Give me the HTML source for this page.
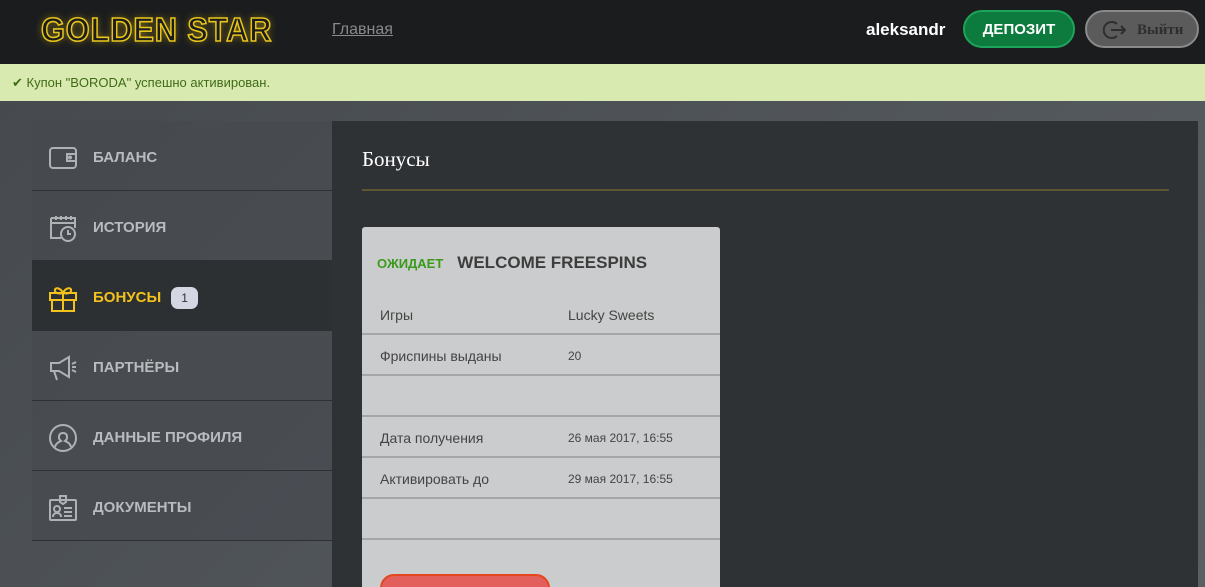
<!DOCTYPE html>
<html><head><meta charset="utf-8"><style>
*{margin:0;padding:0;box-sizing:border-box}
html,body{width:1205px;height:587px;overflow:hidden}
body{font-family:"Liberation Sans","DejaVu Sans",sans-serif;background:linear-gradient(135deg,#45494d 0%,#5a5f63 100%);position:relative}
.top{position:absolute;left:0;top:0;width:1205px;height:64px;background:#1b1c1e}
.logo{position:absolute;left:41px;top:11px;font-size:33px;font-weight:bold;letter-spacing:1px;color:#1b1c1e;-webkit-text-stroke:1.6px #e6c41c;text-shadow:0 0 8px rgba(230,190,20,.55);transform:scaleX(0.93);transform-origin:left}
.home{position:absolute;left:332px;top:21px;color:#8a8a8a;font-size:16px;text-decoration:underline}
.user{position:absolute;left:866px;top:20px;color:#fff;font-size:17px;font-weight:bold}
.dep{position:absolute;left:963px;top:10px;width:112px;height:38px;border-radius:19px;background:#0d7a3e;border:2px solid #1ea35a;color:#fff;font-weight:bold;font-size:15px;text-align:center;line-height:36px}
.out{position:absolute;left:1085px;top:10px;width:114px;height:38px;border-radius:19px;background:#5b5b5b;border:2px solid #8a8a8a;color:#2e2e2e;font-family:"Liberation Serif",serif;font-weight:bold;font-size:15px;line-height:36px;padding-left:50px}
.msg{position:absolute;left:0;top:64px;width:1205px;height:37px;background:#d9eab0;color:#3f6b16;font-size:13px;line-height:37px;padding-left:12px}
.side{position:absolute;left:32px;top:121px;width:300px}
.it{height:70px;border-bottom:1px solid #2e3134;background:rgba(70,74,78,.6);display:flex;align-items:center;padding-left:16px;padding-top:4px;color:#b9bcbf;font-weight:bold;font-size:15px}
.it svg{width:30px;height:30px;margin-right:15px;stroke:#aeb2b5;fill:none;stroke-width:2}
.it.act{background:#2d3033;color:#f4c21c}
.it.act svg{stroke:#f4c21c}
.badge{display:inline-block;background:#d4d6e2;color:#333;border-radius:7px;font-size:12px;width:27px;height:22px;text-align:center;line-height:22px;margin-left:10px;font-weight:normal}
.main{position:absolute;left:332px;top:121px;width:866px;height:466px;background:#2f3235;overflow:hidden}
.h{position:absolute;left:30px;top:26px;color:#fff;font-family:"Liberation Serif",serif;font-size:21px}
.line{position:absolute;left:30px;top:68px;width:807px;height:2px;background:#5e5633}
.card{position:absolute;left:30px;top:106px;width:358px;height:370px;background:#cbcccd;border-radius:3px;color:#444}
.ch{position:absolute;left:15px;top:26px;font-size:17px;font-weight:bold;color:#3d3d3d}
.ch b{color:#3a9a1a;font-size:13px;margin-right:14px}
.row{position:absolute;left:0;width:358px;height:41px;border-bottom:2px solid #a5a6a8;font-size:14px;color:#444}
.row span{position:absolute;left:18px;top:13px}
.row i{position:absolute;left:206px;top:13px;font-style:normal}
.row i.s{font-size:12px;top:14px}
.btn{position:absolute;left:18px;top:347px;width:170px;height:40px;border-radius:14px;background:#e25f5b;border:2px solid #e4461e}
</style></head><body>
<div class="top">
<div class="logo">GOLDEN STAR</div>
<div class="home">Главная</div>
<div class="user">aleksandr</div>
<div class="dep">ДЕПОЗИТ</div>
<div class="out"><svg style="position:absolute;left:16px;top:8px" width="24" height="20" viewBox="0 0 24 20" fill="none" stroke="#2e2e2e" stroke-width="2"><path d="M14 4A8 8 0 1 0 14 16"/><path d="M8 10h14M18 6l4 4-4 4"/></svg>Выйти</div>
</div>
<div class="msg">✔ Купон "BORODA" успешно активирован.</div>
<div class="side">
<div class="it"><svg viewBox="0 0 30 30"><rect x="2" y="5" width="26" height="20" rx="3"/><path d="M28 11h-9v7h9"/><circle cx="22" cy="14.5" r="1"/></svg>БАЛАНС</div>
<div class="it"><svg viewBox="0 0 30 30"><path d="M3 5h24v10M3 5v20h10M3 10h24M8 3v4M13 3v4M18 3v4M23 3v4"/><circle cx="20" cy="21" r="7"/><path d="M20 17v4h3"/></svg>ИСТОРИЯ</div>
<div class="it act"><svg viewBox="0 0 30 30"><rect x="2" y="10" width="26" height="7"/><path d="M4 17v11h22V17M15 10v18M15 10c-3-6-9-6-8-2s8 2 8 2c3-6 9-6 8-2s-8 2-8 2"/></svg>БОНУСЫ<span class="badge">1</span></div>
<div class="it"><svg viewBox="0 0 30 30"><path d="M3 10h8l10-6v20l-10-6H3zM6 18l3 9M24 11l4-2M24 14h4M24 17l4 2"/></svg>ПАРТНЁРЫ</div>
<div class="it"><svg viewBox="0 0 30 30"><circle cx="15" cy="15" r="13"/><path d="M7 24c1-4 4-5 6-6-3-2-3-8 2-8s5 6 2 8c2 1 5 2 6 6"/></svg>ДАННЫЕ ПРОФИЛЯ</div>
<div class="it"><svg viewBox="0 0 30 30"><rect x="2" y="7" width="26" height="20" rx="1"/><path d="M12 3h6v6l-3 2-3-2zM16 15h8M16 19h8M16 23h8"/><circle cx="9" cy="16" r="3"/><path d="M5 24c0-3 2-4 4-4s4 1 4 4"/></svg>ДОКУМЕНТЫ</div>
</div>
<div class="main">
<div class="h">Бонусы</div>
<div class="line"></div>
<div class="card">
<div class="ch"><b>ОЖИДАЕТ</b>WELCOME FREESPINS</div>
<div class="row" style="top:67px"><span>Игры</span><i>Lucky Sweets</i></div>
<div class="row" style="top:108px"><span>Фриспины выданы</span><i class="s">20</i></div>
<div class="row" style="top:149px"></div>
<div class="row" style="top:190px"><span>Дата получения</span><i class="s">26 мая 2017, 16:55</i></div>
<div class="row" style="top:231px"><span>Активировать до</span><i class="s">29 мая 2017, 16:55</i></div>
<div class="row" style="top:272px"></div>
<div class="btn"></div>
</div>
</div>
</body></html>
